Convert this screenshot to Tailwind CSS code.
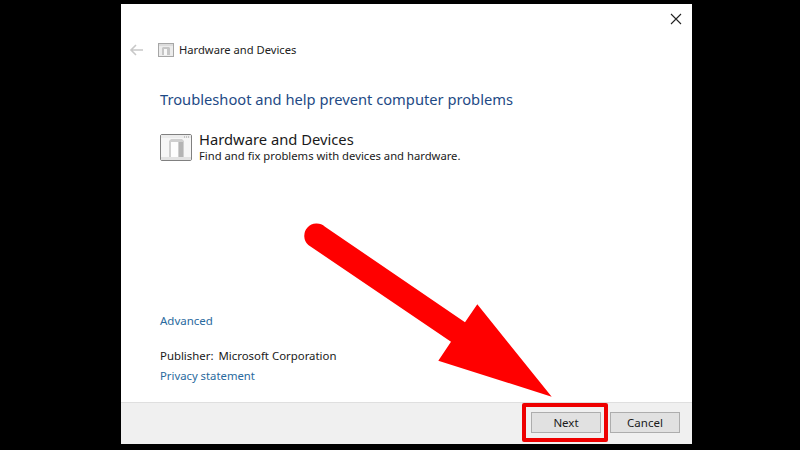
<!DOCTYPE html>
<html>
<head>
    <meta charset="utf-8" />
    <title>Hardware and Devices</title>
    <script src="https://cdn.jsdelivr.net/npm/@tailwindcss/browser@4"></script>
    <meta name="viewport" content="width=device-width, initial-scale=1.0">
</head>
<body class="bg-black w-[800px] h-[450px] overflow-hidden relative font-['Noto_Sans',sans-serif]">

<!-- Dialog window -->
<div class="ml-[121px] mt-[4px] w-[571px] h-[440px] bg-white flex flex-col">
    <!-- Close button -->
    <div class="h-[28px] flex justify-end items-center pr-[10px] pt-[2px]">
        <svg width="12" height="12" viewBox="0 0 12 12" fill="none" stroke="#222222" stroke-width="1.1"><path d="M1 1l10 10M11 1L1 11"/></svg>
    </div>

    <!-- Nav row -->
    <div class="h-[36px] flex items-center pl-[8px]">
        <svg width="15" height="12" viewBox="0 0 15 12" fill="none" stroke="#c8c8c8" stroke-width="1.6"><path d="M14 6H2M7 1L2 6l5 5"/></svg>
        <svg class="ml-[14px]" width="16" height="14" viewBox="0 0 16 14">
            <rect x="0.5" y="0.5" width="15" height="13" fill="#ececec" stroke="#a6a6a6"/>
            <rect x="1" y="1" width="14" height="2" fill="#dcdcdc"/>
            <path d="M4 12V5l1-1h6l1 1v7z" fill="#c6c6c6"/>
            <rect x="6" y="6" width="3" height="6" fill="#f8f8f8"/>
        </svg>
        <span class="ml-[5px] text-[11.2px] text-[#222222] leading-none">Hardware and Devices</span>
    </div>

    <!-- Body -->
    <div class="flex-1 pl-[39px] flex flex-col">
        <h1 class="mt-[20px] text-[14.7px] leading-[22px] text-[#1e4a85]">Troubleshoot and help prevent computer problems</h1>

        <div class="mt-[21px] flex items-center">
            <svg width="32" height="28" viewBox="0 0 32 28">
                <rect x="0.5" y="0.5" width="31" height="26" rx="1.5" fill="#f6f6f6" stroke="#808080"/>
                <rect x="1" y="1" width="30" height="3" fill="#ececec"/>
                <path d="M24 3h5" stroke="#999999" stroke-width="1" stroke-dasharray="1 1"/>
                <path d="M9 23V7l2-2h11l2 2v16z" fill="#cfcfcf"/>
                <rect x="11" y="8" width="7" height="15" fill="#fdfdfd"/>
                <path d="M19 8h4v15h-4z" fill="#b4b4b4"/>
                <rect x="1" y="23" width="30" height="3" fill="#e2e2e2"/>
            </svg>
            <div class="ml-[7px] flex flex-col">
                <span class="text-[14.75px] leading-[17px] text-[#1a1a1a]">Hardware and Devices</span>
                <span class="text-[11.25px] leading-[16px] text-[#1a1a1a]">Find and fix problems with devices and hardware.</span>
            </div>
        </div>

        <a class="mt-[149px] text-[11.5px] leading-[16px] text-[#2a6a9e]">Advanced</a>
        <div class="mt-[19px] text-[11.4px] leading-[16px] text-[#1a1a1a] flex">
            <span>Publisher:</span><span class="ml-[5px]">Microsoft Corporation</span>
        </div>
        <a class="mt-[4px] text-[11.3px] leading-[16px] text-[#2a6a9e]">Privacy statement</a>
    </div>

    <!-- Footer -->
    <div class="h-[42px] bg-[#f0f0f0] border-t border-[#dfdfdf] flex justify-end items-start pt-[9px] pr-[12px] gap-[9px]">
        <button class="w-[70px] h-[21px] bg-[#e1e1e1] border border-[#adadad] text-[11.5px] leading-none text-[#1a1a1a]">Next</button>
        <button class="w-[70px] h-[21px] bg-[#e1e1e1] border border-[#adadad] text-[11.5px] leading-none text-[#1a1a1a]">Cancel</button>
    </div>
</div>

<!-- Red highlight over the Next button -->
<div class="absolute left-[522px] top-[403px] w-[86px] h-[39px] border-[4px] border-[#ee0000] rounded-[2px]"></div>

<!-- Red arrow -->
<svg class="absolute left-0 top-0" width="800" height="450" viewBox="0 0 800 450">
    <path d="M325 226.7L465 322.3L477.3 304.3L551.7 396.7L438.3 360.7L451 341.7L308.3 245A11.1 11.1 0 0 1 325 226.7z" fill="#ff0000"/>
</svg>
</body>
</html>
